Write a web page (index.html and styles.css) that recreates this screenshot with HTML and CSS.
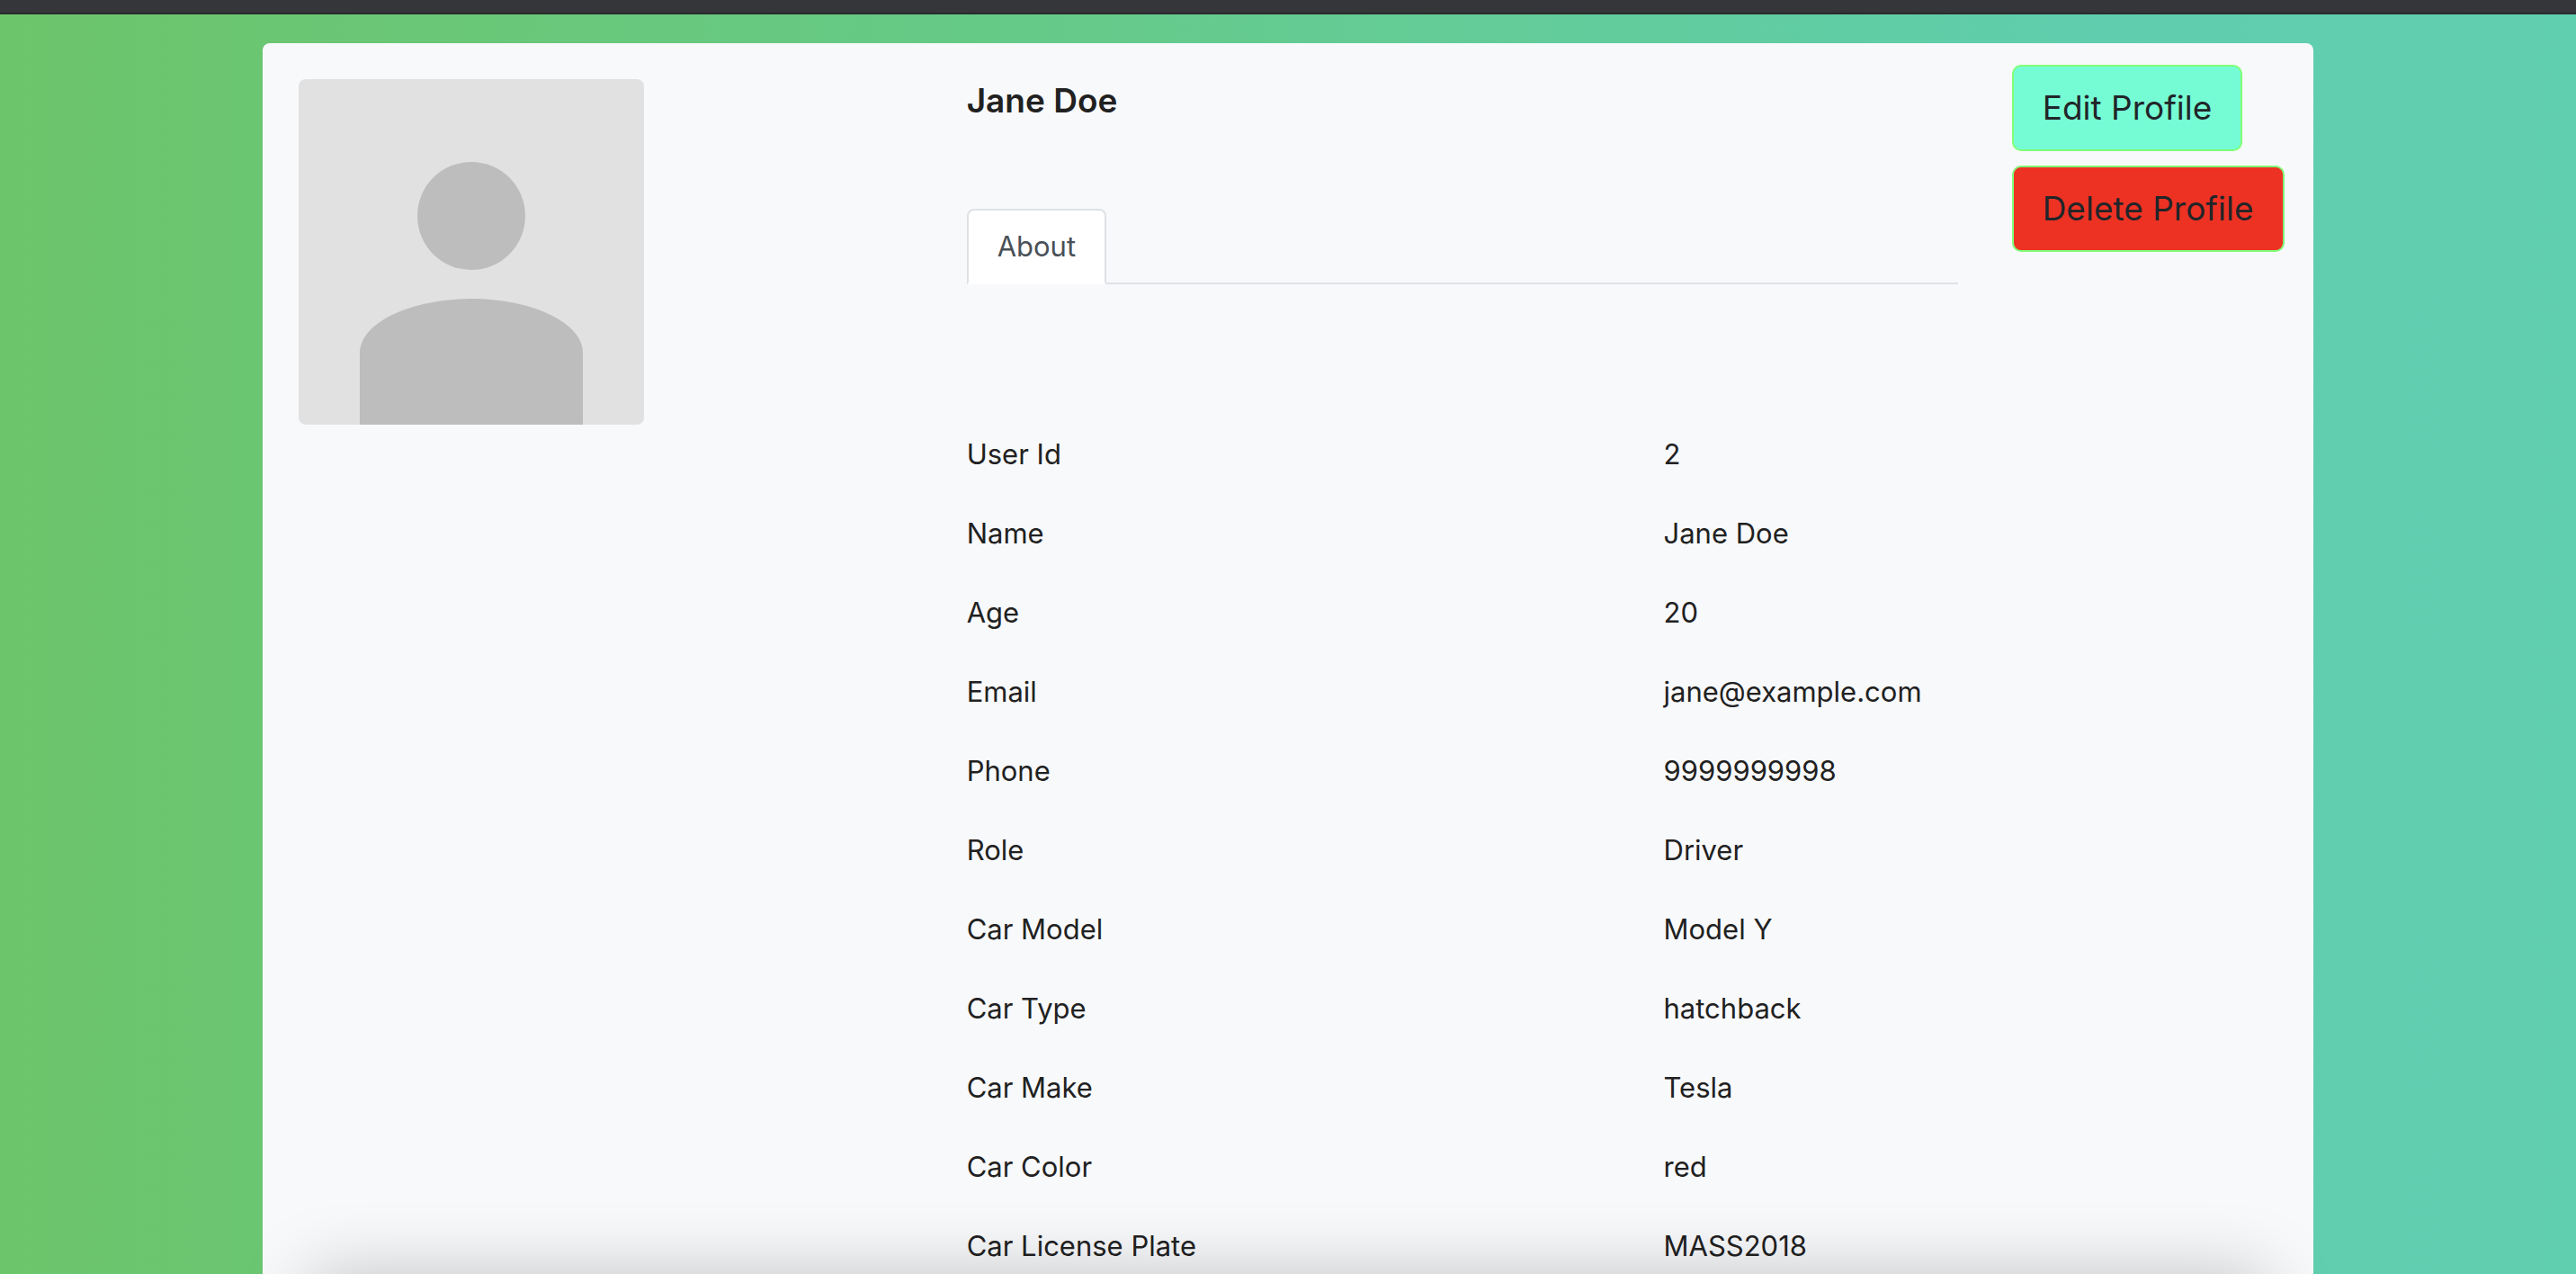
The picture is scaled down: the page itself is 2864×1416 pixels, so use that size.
FILE: index.html
```html
<!DOCTYPE html>
<html lang="en">
<head>
<meta charset="utf-8">
<meta name="viewport" content="width=device-width, initial-scale=1">
<title>Jane Doe</title>
<link rel="stylesheet" href="styles.css">
</head>
<body>
<div class="topbar"></div>
<main class="card">
  <div class="profile-grid">
    <div class="avatar-col">
      <svg class="avatar" viewBox="0 0 384 384" role="img" aria-label="Profile picture">
        <rect width="384" height="384" fill="#e1e1e1"/>
        <circle cx="192" cy="152" r="60" fill="#bdbdbd"/>
        <path d="M68 384V304C68 271 124 244 192 244S316 271 316 304V384Z" fill="#bdbdbd"/>
      </svg>
    </div>
    <div class="head-col">
      <h1 class="name">Jane Doe</h1>
      <nav class="tabs"><a class="tab" href="#about">About</a></nav>
    </div>
    <div class="actions">
      <button class="btn btn-edit" type="button">Edit Profile</button>
      <button class="btn btn-delete" type="button">Delete Profile</button>
    </div>
    <section class="about" id="about">
      <table class="details">
        <tbody>
          <tr><th scope="row">User Id</th><td>2</td></tr>
          <tr><th scope="row">Name</th><td>Jane Doe</td></tr>
          <tr><th scope="row">Age</th><td>20</td></tr>
          <tr><th scope="row">Email</th><td>jane@example.com</td></tr>
          <tr><th scope="row">Phone</th><td>9999999998</td></tr>
          <tr><th scope="row">Role</th><td>Driver</td></tr>
          <tr><th scope="row">Car Model</th><td>Model Y</td></tr>
          <tr><th scope="row">Car Type</th><td>hatchback</td></tr>
          <tr><th scope="row">Car Make</th><td>Tesla</td></tr>
          <tr><th scope="row">Car Color</th><td>red</td></tr>
          <tr><th scope="row">Car License Plate</th><td>MASS2018</td></tr>
        </tbody>
      </table>
    </section>
  </div>
</main>
<div class="bottom-shade"></div>
</body>
</html>
```

FILE: styles.css
```css
* {
  box-sizing: border-box;
}

body {
  display: flex;
  flex-direction: column;
  min-height: 100vh;
  margin: 0;
  background: linear-gradient(to right, #6dc56b 0%, #65ca88 40%, #60ceae 82%, #60cfb0 100%);
  color: #212121;
  font-family: Inter, "Liberation Sans", sans-serif;
  font-size: 31px;
  line-height: 48px;
}

.topbar {
  height: 16px;
  background: #35363a;
  border-bottom: 2px solid #292a2c;
}

.card {
  flex: 1;
  width: 100%;
  max-width: 2280px;
  margin: 32px auto 0;
  background: #f8f9fb;
  border-radius: 8px 8px 0 0;
}

/* Twelve columns; the outer ones bleed past the card's edge */
.profile-grid {
  display: grid;
  grid-template-columns: repeat(12, minmax(0, 1fr));
  grid-template-rows: 433px auto;
  margin: 0 -22px;
}

.avatar-col {
  grid-column: span 4;
  padding: 40px 62px 0;
}

.avatar {
  display: block;
  width: 100%;
  max-width: 384px;
  border-radius: 8px;
}

.head-col {
  grid-column: span 6;
  padding: 40px 30px 0;
}

.name {
  margin: 0 0 96px;
  font-size: 37px;
  font-weight: 600;
  line-height: 48px;
}

.tabs {
  display: flex;
  border-bottom: 2px solid #dee2e6;
}

.tab {
  margin-bottom: -2px;
  padding: 16px 32px;
  background: #fff;
  border: 2px solid #dee2e6;
  border-bottom-color: #fff;
  border-radius: 8px 8px 0 0;
  color: #495057;
  text-decoration: none;
}

.actions {
  grid-column: span 2;
  display: flex;
  flex-direction: column;
  align-items: flex-start;
  gap: 16px;
  padding: 24px 30px 0;
}

.btn {
  padding: 16px 32px;
  border: 2px solid #80ff78;
  border-radius: 10px;
  color: #212529;
  font: inherit;
  font-size: 37px;
  line-height: 60px;
  white-space: nowrap;
  cursor: pointer;
}

.btn-edit {
  background: #76fcd4;
}

.btn-delete {
  background: #ed3223;
}

.about {
  grid-column: 5 / span 8;
  padding-left: 30px;
}

.details {
  width: 100%;
  border-collapse: collapse;
  table-layout: fixed;
}

.details th,
.details td {
  padding: 0 0 40px;
  font-weight: 400;
  text-align: left;
}

.details th {
  width: 51%;
}

.details tr:last-child > * {
  padding-bottom: 0;
}

/* Soft shade rising from below the window's lower edge */
.bottom-shade {
  position: fixed;
  right: 12%;
  bottom: -200px;
  left: 12%;
  height: 200px;
  box-shadow: 0 0 80px rgba(0, 0, 0, 0.22);
  pointer-events: none;
}
```
